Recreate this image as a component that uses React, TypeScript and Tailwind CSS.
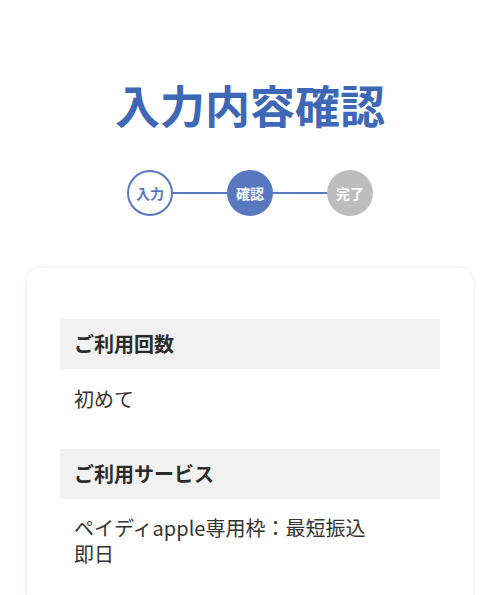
import React from "react";

const font = { fontFamily: '"Noto Sans CJK JP", "Noto Sans", sans-serif' };

export default function App() {
  return (
    <div className="w-[500px] h-[595px] overflow-hidden bg-white" style={font}>
      <div className="pt-[78px] flex flex-col items-center">
        <h1 className="text-[45px] leading-[54px] font-bold text-[#3e67b6]">入力内容確認</h1>
        <div className="mt-[38px] flex items-center">
          <div className="w-[46px] h-[46px] rounded-full border-2 border-[#5a78c0] flex items-center justify-center text-[14px] font-bold text-[#5a78c0]">入力</div>
          <div className="w-[54px] h-[2px] bg-[#5a78c0]" />
          <div className="w-[46px] h-[46px] rounded-full bg-[#5a78c0] flex items-center justify-center text-[14px] font-bold text-white">確認</div>
          <div className="w-[54px] h-[2px] bg-[#5a78c0]" />
          <div className="w-[46px] h-[46px] rounded-full bg-[#bdbdbd] flex items-center justify-center text-[14px] font-bold text-white">完了</div>
        </div>
      </div>
      <div className="mx-[27px] mt-[52px] rounded-[14px] bg-white shadow-[0_0_6px_rgba(0,0,0,0.09)] px-[33px] pt-[51px] pb-[40px]">
        <div className="h-[50px] bg-[#f1f1f1] flex items-center px-[14px] text-[20px] font-bold text-[#2b2b2b]">ご利用回数</div>
        <div className="px-[14px] pt-[16px] pb-[36px] text-[20px] leading-[28px] text-[#333]">初めて</div>
        <div className="h-[50px] bg-[#f1f1f1] flex items-center px-[14px] text-[20px] font-bold text-[#2b2b2b]">ご利用サービス</div>
        <div className="pl-[14px] pt-[16px] text-[20px] leading-[26px] text-[#333] w-[324px]">ペイディapple専用枠：最短振込即日</div>
      </div>
    </div>
  );
}
